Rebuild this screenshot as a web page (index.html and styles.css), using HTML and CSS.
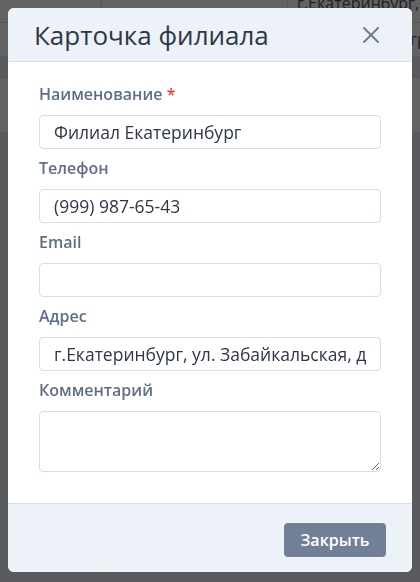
FILE: index.html
```html
<!DOCTYPE html>
<html lang="ru">
<head>
<meta charset="utf-8">
<title>Карточка филиала</title>
<link rel="stylesheet" href="styles.css">
</head>
<body>
<div class="page">
  <div class="row row-a"><div class="c1"></div><div class="c2"></div><div class="c3 shift">г.Екатеринбург, ул. Забайкальская</div></div>
  <div class="row row-b"><div class="c1"></div><div class="c2"></div><div class="c3"><span class="tail">гр. Екатеринбург</span></div></div>
  <div class="row row-c"><div class="c1"></div><div class="c2"></div><div class="c3"></div></div>
  <div class="row row-d"><div class="c1"></div><div class="c2"></div><div class="c3"></div></div>
  <div class="row row-e"><div class="c1"></div><div class="c2"></div><div class="c3"></div></div>
</div>
<div class="overlay">
  <div class="modal">
    <div class="modal-header">
      <h2 class="modal-title">Карточка филиала</h2>
      <button class="close" type="button" aria-label="Закрыть">
        <svg width="16" height="16" viewBox="0 0 16 16"><path d="M1 1 L15 15 M15 1 L1 15" stroke="#6e7b90" stroke-width="1.9" stroke-linecap="round" fill="none"/></svg>
      </button>
    </div>
    <div class="modal-body">
      <div class="field">
        <label class="label">Наименование <span class="req">*</span></label>
        <input class="input" type="text" value="Филиал Екатеринбург">
      </div>
      <div class="field">
        <label class="label">Телефон</label>
        <input class="input" type="text" value="(999) 987-65-43">
      </div>
      <div class="field">
        <label class="label">Email</label>
        <input class="input" type="text" value="">
      </div>
      <div class="field">
        <label class="label">Адрес</label>
        <input class="input" type="text" value="г.Екатеринбург, ул. Забайкальская, д. 12">
      </div>
      <div class="field">
        <label class="label">Комментарий</label>
        <textarea class="textarea"></textarea>
      </div>
    </div>
    <div class="modal-footer">
      <button class="btn" type="button">Закрыть</button>
    </div>
  </div>
</div>
</body>
</html>
```
FILE: styles.css
```css
html, body {
  margin: 0;
  padding: 0;
}
body {
  width: 420px;
  height: 582px;
  overflow: hidden;
  background: #5f6063;
  font-family: "Open Sans", "Noto Sans", sans-serif;
}
.page {
  display: flex;
  flex-direction: column;
}
.row {
  display: flex;
  border-bottom: 1px solid #56575a;
  overflow: hidden;
}
.row-a { height: 22px; background: #626262; }
.row-b { height: 33px; background: #626262; }
.row-c { height: 20px; background: #595a5e; }
.row-d { height: 54px; background: #626262; }
.row-e { height: 460px; background: #595a5e; }
.c1 { width: 101px; flex-shrink: 0; border-right: 1px solid #58585a; }
.c2 { width: 185px; flex-shrink: 0; border-right: 1px solid #58585a; }
.c3 {
  flex: 1;
  min-width: 0;
  padding-left: 9px;
  font-size: 16px;
  color: #1f2022;
  white-space: nowrap;
  line-height: 33px;
  overflow: hidden;
}
.shift { line-height: 14px; margin-top: -4px; }
.tail { padding-left: 113px; }

.overlay {
  position: fixed;
  inset: 0;
  display: flex;
  justify-content: center;
  align-items: flex-start;
  padding-top: 8px;
}
.modal {
  width: 404px;
  background: #fff;
  border-radius: 6px;
  overflow: hidden;
  display: flex;
  flex-direction: column;
}
.modal-header {
  height: 53px;
  background: #edf1f8;
  border-bottom: 1px solid #d5deea;
  display: flex;
  align-items: center;
  justify-content: space-between;
  padding: 0 33px 0 26px;
}
.modal-title {
  margin: 0;
  font-size: 26px;
  font-weight: 400;
  color: #2d3748;
  line-height: 32px;
}
.close {
  border: 0;
  background: none;
  padding: 0;
  width: 16px;
  height: 16px;
  display: flex;
  margin-top: 1px;
}
.modal-body {
  padding: 21px 31px 31px;
  display: flex;
  flex-direction: column;
  gap: 8px;
}
.field {
  display: flex;
  flex-direction: column;
}
.label {
  font-size: 16px;
  font-weight: 600;
  color: #5f6e87;
  line-height: 22px;
  margin-bottom: 10px;
}
.req { color: #e53e3e; }
.input, .textarea {
  -webkit-appearance: none;
  appearance: none;
  box-sizing: border-box;
  width: 100%;
  border: 1px solid #d5deea;
  border-radius: 4px;
  font-family: "Open Sans", "Noto Sans", sans-serif;
  font-size: 17.5px;
  color: #2d3748;
  background: #fff;
  margin: 0;
  padding-left: 14px;
  padding-right: 14px;
}
.input {
  height: 34px;
  padding-top: 0;
  padding-bottom: 0;
}
.textarea {
  height: 61px;
  padding-top: 6px;
  padding-bottom: 6px;
  resize: vertical;
  display: block;
}
.modal-footer {
  background: #edf1f8;
  border-top: 1px solid #d5deea;
  height: 69px;
  box-sizing: border-box;
  display: flex;
  justify-content: flex-end;
  align-items: flex-start;
  padding: 19px 26px 0;
}
.btn {
  width: 102px;
  height: 34px;
  border: 0;
  border-radius: 4px;
  background: #718096;
  color: #fff;
  font-family: "Open Sans", "Noto Sans", sans-serif;
  font-size: 16px;
  font-weight: 600;
  padding: 0;
}
```
